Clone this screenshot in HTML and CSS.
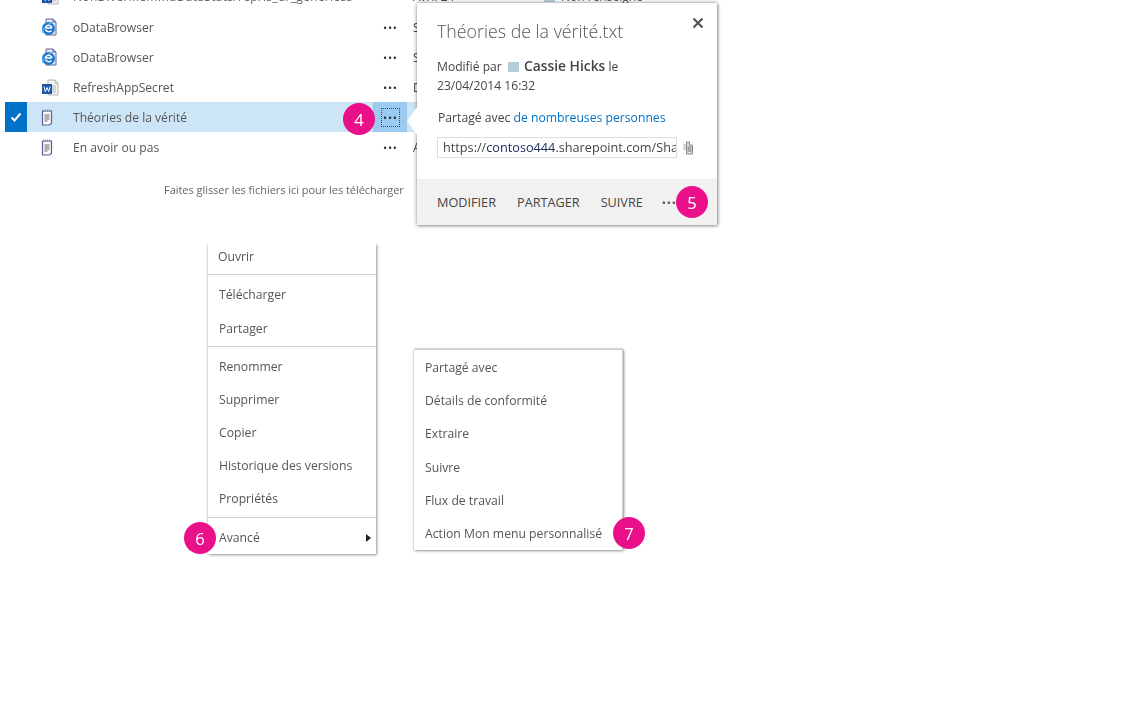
FILE: index.html
```html
<!DOCTYPE html>
<html lang="fr">
<head>
<meta charset="utf-8">
<title>Théories de la vérité</title>
<link rel="stylesheet" href="styles.css">
</head>
<body>
<svg class="defs" width="0" height="0" aria-hidden="true">
  <defs>
    <symbol id="ie" viewBox="0 0 16 18">
      <path d="M5 1h7l3 3v13H5z" fill="#e6e9f6" stroke="#5f669c"/>
      <path d="M12 1v3h3" fill="none" stroke="#5f669c"/>
      <circle cx="7.500" cy="10.500" r="6.500" fill="#1f78cf"/>
      <path d="M2 15c-1-3 4-9 10-11" fill="none" stroke="#63b4ea" stroke-width="1.200"/>
      <path d="M4.500 10h6.300M4.600 11.500c.5 2.400 4 3 6 1.300M4.500 10c.3-3 5.300-3.800 6.500-.2" fill="none" stroke="#fff" stroke-width="1.400"/>
    </symbol>
    <symbol id="txt" viewBox="0 0 13 17">
      <path d="M2.500 2h9v12.500L9 16H2.500z" fill="#fafafa" stroke="#5a5a9e" stroke-width="1.200"/>
      <path d="M3.500 .5v2.500M5.500 .5v2.500M7.500 .5v2.500M9.500 .5v2.500" stroke="#b8923a" stroke-width="1"/>
      <path d="M4.500 6h5M4.500 8h5M4.500 10h5M4.500 12h3" stroke="#666" stroke-width="1"/>
    </symbol>
    <symbol id="word" viewBox="0 0 17 17">
      <path d="M6 1h7l3 3v12H6z" fill="#f3f3f3" stroke="#b5b5b5"/>
      <path d="M13 1v3h3M10 7h4M10 9h4M10 11h4M10 13h4" fill="none" stroke="#b5b5b5"/>
      <rect x="0" y="5" width="10" height="10" fill="#1d57a8"/>
      <path d="M2 7.500l1.300 5 1.700-4 1.700 4 1.300-5" fill="none" stroke="#fff" stroke-width="1"/>
    </symbol>
  </defs>
</svg>

<main class="page">
  <section class="list">
    <div class="row clipped">
      <span class="cell-check"></span>
      <span class="cell-icon"><svg class="icon-word"><use href="#word"/></svg></span>
      <span class="cell-name">NonDiverifiemIndDataStats/repris_dr_generiess</span>
      <span class="cell-more"></span>
      <span class="cell-date">Avril 24</span>
      <span class="cell-author"><i class="presence"></i>Non renseigné</span>
    </div>
    <div class="row">
      <span class="cell-check"></span>
      <span class="cell-icon"><svg class="icon-ie"><use href="#ie"/></svg></span>
      <span class="cell-name">oDataBrowser</span>
      <span class="cell-more"><span class="dots">•••</span></span>
      <span class="cell-date">S</span>
    </div>
    <div class="row">
      <span class="cell-check"></span>
      <span class="cell-icon"><svg class="icon-ie"><use href="#ie"/></svg></span>
      <span class="cell-name">oDataBrowser</span>
      <span class="cell-more"><span class="dots">•••</span></span>
      <span class="cell-date">S</span>
    </div>
    <div class="row">
      <span class="cell-check"></span>
      <span class="cell-icon"><svg class="icon-word"><use href="#word"/></svg></span>
      <span class="cell-name">RefreshAppSecret</span>
      <span class="cell-more"><span class="dots">•••</span></span>
      <span class="cell-date">D</span>
    </div>
    <div class="row selected">
      <span class="cell-check"><svg class="check" viewBox="0 0 12 10"><path d="M1.500 5.500l3 3 6-7" fill="none" stroke="#fff" stroke-width="2"/></svg></span>
      <span class="cell-icon"><svg class="icon-txt"><use href="#txt"/></svg></span>
      <span class="cell-name">Théories de la vérité</span>
      <span class="cell-more"><span class="focus"><span class="dots">•••</span></span></span>
      <span class="cell-date"></span>
    </div>
    <div class="row">
      <span class="cell-check"></span>
      <span class="cell-icon"><svg class="icon-txt"><use href="#txt"/></svg></span>
      <span class="cell-name">En avoir ou pas</span>
      <span class="cell-more"><span class="dots">•••</span></span>
      <span class="cell-date">A</span>
    </div>
    <p class="drop">Faites glisser les fichiers ici pour les télécharger</p>
  </section>

  <span class="badge badge-4">4</span>

  <aside class="callout">
    <span class="notch"></span>
    <div class="callout-body">
      <h2 class="callout-title">Théories de la vérité.txt</h2>
      <button class="close" type="button" aria-label="Fermer"><svg viewBox="0 0 12 12"><path d="M1.500 1.500l9 9M10.500 1.500l-9 9" stroke="#555" stroke-width="2.200"/></svg></button>
      <p class="meta">Modifié par <i class="presence"></i> <b class="author">Cassie Hicks</b> le<br>23/04/2014 16:32</p>
      <p class="shared">Partagé avec <a class="link">de nombreuses personnes</a></p>
      <div class="url-row">
        <div class="url">https://<span class="url-host">contoso444</span>.sharepoint.com/Shared%20Documents</div>
        <svg class="url-icon" viewBox="0 0 10 14"><path d="M3.500 1h3v3h3v9h-6z" fill="#dcdcdc" stroke="#8a8a8a"/><path d="M.5 3h2v6h-2z" fill="#c4c4c4"/><path d="M4.500 6h4M4.500 8h4M4.500 10h4" stroke="#777"/></svg>
      </div>
    </div>
    <div class="callout-actions">
      <span>MODIFIER</span>
      <span>PARTAGER</span>
      <span>SUIVRE</span>
      <span class="dots more">•••</span>
    </div>
    <span class="badge badge-5">5</span>
  </aside>

  <nav class="menu menu-main">
    <ul class="group first">
      <li>Ouvrir</li>
    </ul>
    <ul class="group second">
      <li>Télécharger</li>
      <li>Partager</li>
    </ul>
    <ul class="group third">
      <li>Renommer</li>
      <li>Supprimer</li>
      <li>Copier</li>
      <li>Historique des versions</li>
      <li>Propriétés</li>
    </ul>
    <ul class="group fourth">
      <li class="has-sub">Avancé<span class="caret"></span></li>
    </ul>
    <span class="badge badge-6">6</span>
  </nav>

  <nav class="menu menu-sub">
    <ul class="group">
      <li>Partagé avec</li>
      <li>Détails de conformité</li>
      <li>Extraire</li>
      <li>Suivre</li>
      <li>Flux de travail</li>
      <li>Action Mon menu personnalisé</li>
    </ul>
    <span class="badge badge-7">7</span>
  </nav>
</main>
</body>
</html>
```
FILE: styles.css
```css
* { box-sizing: border-box; }
html, body { margin: 0; height: 100%; background: #fff; overflow: hidden; }
body { font-family: "Open Sans", "Noto Sans", sans-serif; color: #444; font-size: 12px; }
.defs { position: absolute; }
ul { list-style: none; margin: 0; padding: 0; }
p, h2 { margin: 0; }

.page { position: relative; width: 1123px; height: 728px; overflow: hidden; filter: blur(.3px); }

.list { margin-top: -18px; padding-left: 5px; width: 700px; }
.row { display: flex; align-items: center; height: 30px; }
.clipped { padding-bottom: 2px; }
.cell-check { width: 22px; height: 30px; display: flex; align-items: center; justify-content: center; flex: none; }
.cell-icon { width: 46px; padding-left: 14px; display: flex; align-items: center; flex: none; }
.cell-name { width: 300px; flex: none; white-space: nowrap; font-size: 12.100px; color: #555; }
.cell-more { width: 34px; height: 30px; display: flex; align-items: center; justify-content: center; flex: none; color: #333; }
.dots { font-size: 11px; letter-spacing: .8px; line-height: 1; margin-right: -.8px; }
.cell-date { padding-left: 6px; width: 134px; flex: none; }
.cell-author { color: #555; white-space: nowrap; }
.cell-author .presence { margin-right: 6px; }
.clipped .cell-name { color: #666; letter-spacing: .25px; }
.selected { background: #cde6f7; width: 412px; }
.selected .cell-check { background: #0072c6; }
.selected .cell-more { background: #9bcbf0; }
.focus { outline: 1px dotted #444; width: 17px; height: 17px; display: flex; align-items: center; justify-content: center; }
.check { width: 12px; height: 10px; }
.icon-ie { width: 16px; height: 18px; margin-left: 0; }
.icon-txt { width: 13px; height: 17px; margin-left: -1px; }
.icon-word { width: 17px; height: 17px; margin-left: 1px; }
.presence { display: inline-block; width: 11px; height: 10px; background: #b4ced9; margin: 0 2px 0 3px; vertical-align: -1px; }
.drop { margin: 20px 0 0 159px; font-size: 11px; letter-spacing: -.04px; color: #666; white-space: nowrap; }

.badge { position: absolute; width: 32px; height: 32px; border-radius: 50%; background: #e9108a; color: #fff; font-size: 16.500px; font-weight: 400; display: flex; align-items: center; justify-content: center; z-index: 5; }
.badge-4 { left: 343px; top: 103px; }
.badge-5 { left: 259px; top: 183px; }
.badge-6 { left: -24px; top: 278px; }
.badge-7 { left: 199px; top: 167px; }

.callout { position: absolute; left: 417px; top: 3px; width: 300px; height: 222px; background: #fff; box-shadow: 0 0 4px rgba(0,0,0,.45), 1px 1px 3px rgba(0,0,0,.25); display: flex; flex-direction: column; }
.notch { position: absolute; left: -10px; top: 104px; width: 0; height: 0; border-style: solid; border-width: 14px 10px 14px 0; border-color: transparent #fff transparent transparent; }
.callout-body { position: relative; flex: 1; padding: 16px 20px 0; }
.callout-title { font-size: 17.800px; font-weight: 300; color: #555; line-height: 25px; white-space: nowrap; }
.close { position: absolute; right: 13px; top: 14px; width: 12px; height: 12px; padding: 0; border: 0; background: none; display: block; }
.close svg { display: block; width: 12px; height: 12px; }
.meta { margin-top: 12px; line-height: 19px; font-size: 12.100px; color: #444; white-space: nowrap; }
.author { font-size: 13.800px; font-weight: 600; }
.shared { margin-top: 14px; padding-left: 1px; font-size: 12.200px; line-height: 18px; color: #444; white-space: nowrap; }
.link { color: #0072c6; }
.url-row { display: flex; align-items: center; gap: 6px; margin-top: 10px; }
.url { width: 240px; height: 21px; line-height: 19px; border: 1px solid #ddd; padding-left: 5px; font-size: 12.700px; overflow: hidden; white-space: nowrap; color: #444; }
.url-host { color: #1a2a5a; }
.url-icon { width: 10px; height: 14px; }
.callout-actions { height: 46px; background: #f1f1f1; display: flex; align-items: center; gap: 21px; padding-left: 20px; font-size: 12.700px; color: #444; }
.more { color: #555; margin-left: -2px; }

.menu { position: absolute; background: #fff; font-size: 12.200px; color: #555; box-shadow: 1px 1px 3px rgba(0,0,0,.35), 0 0 2px rgba(0,0,0,.3); }
.menu li { white-space: nowrap; }
.menu-main { left: 208px; top: 244px; width: 168px; height: 310px; clip-path: inset(0 -40px -10px -40px); }
.menu-main .group { border-top: 1px solid #d0d0d0; }
.menu-main .group.first { border-top: 0; }
.menu-main li { height: 33px; line-height: 33px; padding-left: 11px; position: relative; }
.menu-main .first li { height: 30px; line-height: 26px; padding-left: 10px; }
.menu-main .second { padding-top: 3px; }
.menu-main .second li { height: 34px; line-height: 34px; }
.menu-main .third { padding: 3px 0 2px; }
.menu-main .fourth { padding-top: 3px; }
.caret { position: absolute; right: 5px; top: 13px; width: 0; height: 0; border-style: solid; border-width: 4px 0 4px 5px; border-color: transparent transparent transparent #222; }
.menu-sub { left: 414px; top: 349px; width: 209px; height: 201px; border-top: 1px solid #ccc; border-right: 1px solid #ccc; }
.menu-sub .group { padding: 1px 0; }
.menu-sub li { height: 33.200px; line-height: 33px; padding-left: 11px; }
```
